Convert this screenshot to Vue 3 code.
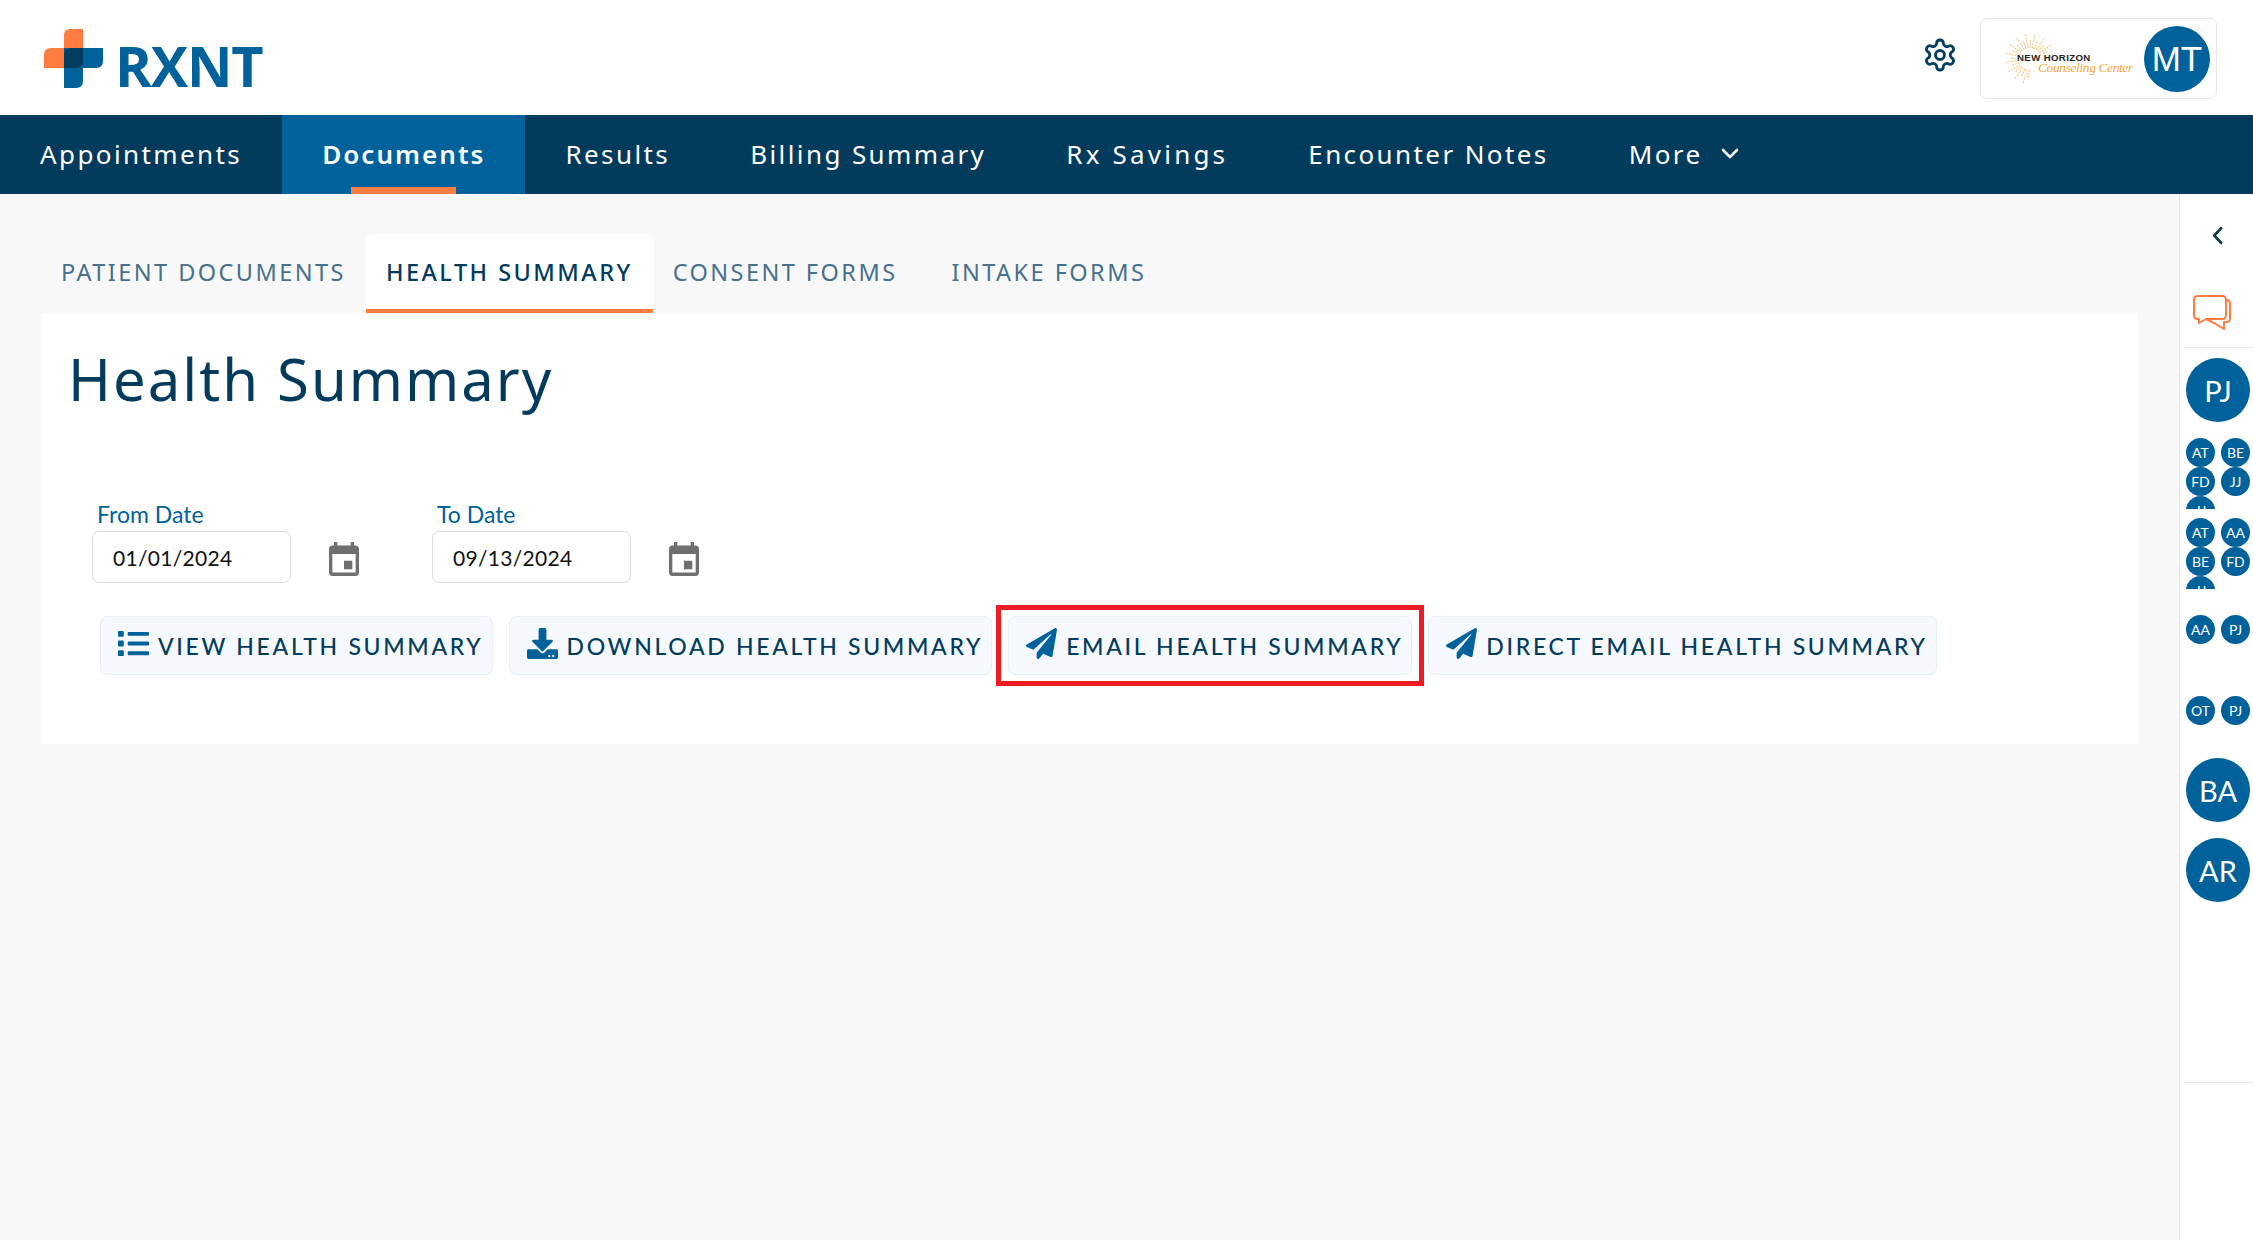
<script setup>
const navItems = [
  { label: 'Appointments' },
  { label: 'Documents', active: true },
  { label: 'Results' },
  { label: 'Billing Summary' },
  { label: 'Rx Savings', wide: true },
  { label: 'Encounter Notes' },
  { label: 'More', caret: true },
]
const tabs = [
  { label: 'PATIENT DOCUMENTS' },
  { label: 'HEALTH SUMMARY', active: true },
  { label: 'CONSENT FORMS' },
  { label: 'INTAKE FORMS', far: true },
]
const dates = [
  { label: 'From Date', value: '01/01/2024' },
  { label: 'To Date', value: '09/13/2024' },
]
const plane = 'M476 3.2L12.5 270.6c-18.1 10.4-15.8 35.6 2.2 43.2L121 358.4l287.3-253.2c5.5-4.9 13.3 2.6 8.6 8.3L176 407v80.5c0 23.6 28.5 32.9 42.5 15.8L282 426l124.6 52.2c14.2 6 30.4-2.9 33-18.2l72-432C515 7.8 493.3-6.8 476 3.2z'
const download = 'M216 0h80c13.3 0 24 10.7 24 24v168h87.7c17.8 0 26.7 21.5 14.1 34.1L269.7 378.3c-7.5 7.5-19.8 7.5-27.3 0L90.1 226.1c-12.6-12.6-3.7-34.1 14.1-34.1H192V24c0-13.3 10.7-24 24-24zm296 376v112c0 13.3-10.7 24-24 24H24c-13.3 0-24-10.7-24-24V376c0-13.3 10.7-24 24-24h146.7l49 49c20.1 20.1 52.5 20.1 72.6 0l49-49H488c13.3 0 24 10.7 24 24zm-124 88c0-11-9-20-20-20s-20 9-20 20 9 20 20 20 20-9 20-20zm64 0c0-11-9-20-20-20s-20 9-20 20 9 20 20 20 20-9 20-20z'
const list = 'M80 368H16a16 16 0 0 0-16 16v64a16 16 0 0 0 16 16h64a16 16 0 0 0 16-16v-64a16 16 0 0 0-16-16zm0-320H16A16 16 0 0 0 0 64v64a16 16 0 0 0 16 16h64a16 16 0 0 0 16-16V64a16 16 0 0 0-16-16zm0 160H16a16 16 0 0 0-16 16v64a16 16 0 0 0 16 16h64a16 16 0 0 0 16-16v-64a16 16 0 0 0-16-16zm416 176H176a16 16 0 0 0-16 16v32a16 16 0 0 0 16 16h320a16 16 0 0 0 16-16v-32a16 16 0 0 0-16-16zm0-320H176a16 16 0 0 0-16 16v32a16 16 0 0 0 16 16h320a16 16 0 0 0 16-16V80a16 16 0 0 0-16-16zm0 160H176a16 16 0 0 0-16 16v32a16 16 0 0 0 16 16h320a16 16 0 0 0 16-16v-32a16 16 0 0 0-16-16z'
const actions = [
  { label: 'VIEW HEALTH SUMMARY', icon: list },
  { label: 'DOWNLOAD HEALTH SUMMARY', icon: download },
  { label: 'EMAIL HEALTH SUMMARY', icon: plane, marked: true },
  { label: 'DIRECT EMAIL HEALTH SUMMARY', icon: plane },
]
const groups = [
  { names: ['AT', 'BE', 'FD', 'JJ', 'JJ'], kind: 'lead clipped' },
  { names: ['AT', 'AA', 'BE', 'FD', 'JJ'], kind: 'clipped' },
  { names: ['AA', 'PJ'], kind: 'pair-a' },
  { names: ['OT', 'PJ'], kind: 'pair-b' },
]
const rays = Array.from({ length: 23 }, (_, i) => {
  const a = ((i * 11 + 95) * Math.PI) / 180
  const far = i % 2 ? 26 : 20
  return { x1: 34 + Math.cos(a) * 11, y1: 27 + Math.sin(a) * 11, x2: 34 + Math.cos(a) * far, y2: 27 + Math.sin(a) * far }
})
</script>

<template>
  <div class="page">
    <header class="topbar">
      <div class="brand">
        <svg class="cross" viewBox="0 0 59 59" width="59" height="59" aria-hidden="true">
          <path fill="#ff7d40" d="M26 0h13v39H0V26q0-7 7-7h13V6q0-6 6-6z" />
          <path fill="#00619b" d="M20 19h39v13q0 7-7 7H39v13q0 7-7 7H20z" />
          <path fill="#033d5f" d="M27 19h12v13q0 7-7 7H20V26q0-7 7-7z" />
        </svg>
        <span class="wordmark">RXNT</span>
      </div>
      <div class="top-right">
        <svg class="gear" viewBox="0 0 24 24" width="36" height="36" fill="none" stroke="#033d5f" stroke-width="1.9" stroke-linejoin="round" aria-hidden="true">
          <path d="M12.22 2h-.44a2 2 0 0 0-2 2v.18a2 2 0 0 1-1 1.73l-.43.25a2 2 0 0 1-2 0l-.15-.08a2 2 0 0 0-2.73.73l-.22.38a2 2 0 0 0 .73 2.73l.15.1a2 2 0 0 1 1 1.72v.51a2 2 0 0 1-1 1.74l-.15.09a2 2 0 0 0-.73 2.73l.22.38a2 2 0 0 0 2.73.73l.15-.08a2 2 0 0 1 2 0l.43.25a2 2 0 0 1 1 1.73V20a2 2 0 0 0 2 2h.44a2 2 0 0 0 2-2v-.18a2 2 0 0 1 1-1.73l.43-.25a2 2 0 0 1 2 0l.15.08a2 2 0 0 0 2.73-.73l.22-.39a2 2 0 0 0-.73-2.73l-.15-.08a2 2 0 0 1-1-1.74v-.5a2 2 0 0 1 1-1.74l.15-.09a2 2 0 0 0 .73-2.73l-.22-.38a2 2 0 0 0-2.73-.73l-.15.08a2 2 0 0 1-2 0l-.43-.25a2 2 0 0 1-1-1.73V4a2 2 0 0 0-2-2z" />
          <circle cx="12" cy="12" r="3" />
        </svg>
        <div class="account">
          <div class="clinic">
            <svg class="sun" viewBox="0 0 60 54" width="60" height="54" aria-hidden="true">
              <line v-for="(r, i) in rays" :key="i" :x1="r.x1" :y1="r.y1" :x2="r.x2" :y2="r.y2" stroke="#fbc680" stroke-width="1.1" stroke-dasharray="2 1" />
            </svg>
            <span class="clinic-name">NEW HORIZON</span>
            <span class="clinic-script">Counseling Center</span>
          </div>
          <div class="avatar-mt">MT</div>
        </div>
      </div>
    </header>

    <nav class="nav">
      <a v-for="item in navItems" :key="item.label" class="nav-item" :class="{ active: item.active, wide: item.wide }">
        {{ item.label }}
        <svg v-if="item.caret" class="caret" viewBox="0 0 18 11" width="18" height="11" aria-hidden="true">
          <path d="M2 2l7 7 7-7" fill="none" stroke="#fff" stroke-width="2.6" stroke-linecap="round" stroke-linejoin="round" />
        </svg>
      </a>
    </nav>

    <div class="body">
      <main class="main">
        <div class="tabs">
          <div v-for="t in tabs" :key="t.label" class="tab" :class="{ active: t.active, far: t.far }">{{ t.label }}</div>
        </div>
        <section class="card">
          <h1 class="title">Health Summary</h1>
          <div class="dates">
            <div v-for="d in dates" :key="d.label" class="date">
              <div class="field">
                <label class="date-label">{{ d.label }}</label>
                <div class="date-input">{{ d.value }}</div>
              </div>
              <svg class="cal" viewBox="3 1 18 20" width="30" height="34" preserveAspectRatio="none" aria-hidden="true">
                <path fill="#6f6f6f" d="M17 12h-5v5h5v-5zM16 1v2H8V1H6v2H5c-1.11 0-1.99.9-1.99 2L3 19c0 1.1.89 2 2 2h14c1.1 0 2-.9 2-2V5c0-1.1-.9-2-2-2h-1V1h-2zm3 18H5V8h14v11z" />
              </svg>
            </div>
          </div>
          <div class="actions">
            <button v-for="a in actions" :key="a.label" class="action" type="button">
              <svg class="action-icon" viewBox="0 0 512 512" width="31" height="31" aria-hidden="true">
                <path :d="a.icon" fill="#00619b" />
              </svg>
              <span>{{ a.label }}</span>
              <span v-if="a.marked" class="marker"></span>
            </button>
          </div>
        </section>
      </main>

      <aside class="side">
        <div class="side-top">
          <svg viewBox="0 0 12 20" width="11" height="19" aria-hidden="true">
            <path d="M10 2L2.5 10l7.5 8" fill="none" stroke="#0c3c40" stroke-width="3" stroke-linecap="round" stroke-linejoin="round" />
          </svg>
          <svg class="chat" viewBox="0 0 38 36" width="38" height="36" fill="none" stroke="#ff7d40" stroke-width="2" stroke-linejoin="round" aria-hidden="true">
            <path d="M5 1h24q4 0 4 4v15q0 4-4 4H13l-7 4 0-4H5q-4 0-4-4V5q0-4 4-4z" />
            <path d="M33 5q4 0 4 4v14q0 4-4 4h-2v7l-10-6-8-4" />
          </svg>
        </div>
        <div class="avatars">
          <div class="avatar-lg first">PJ</div>
          <div v-for="(g, i) in groups" :key="i" class="group" :class="g.kind">
            <div v-for="(n, j) in g.names" :key="j" class="avatar-sm">{{ n }}</div>
          </div>
          <div class="avatar-lg second">BA</div>
          <div class="avatar-lg third">AR</div>
        </div>
        <div class="side-rule"></div>
      </aside>
    </div>
  </div>
</template>

<style>
html, body { margin: 0; background: #f8f8f8; }
</style>

<style scoped>
.page {
  width: 2253px;
  height: 1240px;
  display: flex;
  flex-direction: column;
  overflow: hidden;
  background: #f8f8f8;
  font-family: "Noto Sans", sans-serif;
}
.topbar {
  height: 115px;
  flex: none;
  background: #fff;
  display: flex;
  justify-content: space-between;
  align-items: flex-start;
  box-sizing: border-box;
  padding-left: 44px;
}
.brand {
  display: flex;
  align-items: flex-start;
  margin-top: 29px;
}
.wordmark {
  font-family: "Open Sans", sans-serif;
  font-weight: 700;
  font-size: 56px;
  line-height: 59px;
  margin-left: 12px;
  margin-top: 7px;
  color: #00619b;
  letter-spacing: -1.2px;
}
.top-right {
  display: flex;
  align-items: flex-start;
  padding-right: 36px;
}
.gear {
  margin-top: 37px;
  margin-right: 22px;
}
.account {
  margin-top: 18px;
  width: 237px;
  height: 81px;
  box-sizing: border-box;
  border: 1px solid #e8e8e8;
  border-radius: 7px;
  display: flex;
  align-items: center;
  justify-content: space-between;
  padding: 0 6px 0 15px;
}
.clinic {
  position: relative;
  width: 136px;
  height: 54px;
}
.sun { position: absolute; left: 0; top: 0; }
.clinic-name {
  position: absolute;
  left: 21px;
  top: 20px;
  font-family: "Liberation Sans", sans-serif;
  font-size: 9.6px;
  font-weight: 700;
  color: #222;
  letter-spacing: 0.4px;
  white-space: nowrap;
}
.clinic-script {
  position: absolute;
  left: 42px;
  top: 28px;
  font-family: "Liberation Serif", serif;
  font-style: italic;
  font-size: 13.5px;
  letter-spacing: -0.4px;
  color: #f9a83a;
  white-space: nowrap;
}
.avatar-mt {
  width: 66px;
  height: 66px;
  border-radius: 50%;
  background: #00619b;
  color: #fff;
  font-family: "Liberation Sans", sans-serif;
  font-size: 35px;
  display: flex;
  align-items: center;
  justify-content: center;
}
.nav {
  height: 79px;
  flex: none;
  background: #033b5c;
  display: flex;
}
.nav-item {
  position: relative;
  display: flex;
  align-items: center;
  gap: 18px;
  padding: 0 40px 2px;
  color: #fff;
  font-size: 26px;
  letter-spacing: 2.4px;
}
.nav-item.active {
  background: #00619b;
  font-weight: 600;
  letter-spacing: 2.05px;
}
.nav-item.wide { letter-spacing: 3.2px; }
.nav-item.active::after {
  content: "";
  position: absolute;
  left: 69px;
  right: 69px;
  bottom: 0;
  height: 7px;
  background: #ff7d40;
}
.body {
  flex: 1;
  display: flex;
  min-height: 0;
}
.main {
  flex: 1;
  padding: 40px 41px 0;
  min-width: 0;
}
.tabs {
  display: flex;
  height: 79px;
}
.tab {
  padding: 0 20px 3px;
  display: flex;
  align-items: center;
  box-sizing: border-box;
  font-size: 23.5px;
  letter-spacing: 2.45px;
  color: #46708c;
  border-radius: 8px 8px 0 0;
  white-space: nowrap;
}
.tab.active {
  background: #fff;
  color: #033b5c;
  font-weight: 500;
  border-bottom: 4px solid #ff7d40;
  padding-bottom: 0;
}
.tab.far { margin-left: 14px; }
.card {
  height: 431px;
  background: #fff;
  box-sizing: border-box;
  padding: 28px 0 0 0;
}
.title {
  margin: 0 0 0 27px;
  font-size: 58px;
  font-weight: 400;
  line-height: 76px;
  color: #033b5c;
  letter-spacing: 2px;
}
.dates {
  display: flex;
  margin: 83px 0 0 51px;
  gap: 73px;
}
.date {
  display: flex;
  align-items: flex-end;
}
.field {
  display: flex;
  flex-direction: column;
}
.date-label {
  font-family: Lato, sans-serif;
  font-size: 23px;
  line-height: 28px;
  color: #00619b;
  padding-left: 5px;
  margin-bottom: 3px;
}
.date-input {
  width: 199px;
  height: 52px;
  box-sizing: border-box;
  border: 1px solid #dedede;
  border-radius: 7px;
  background: #fff;
  padding-left: 20px;
  display: flex;
  align-items: center;
  font-family: Lato, sans-serif;
  font-size: 21px;
  letter-spacing: 0.3px;
  color: #111;
}
.cal {
  margin-left: 38px;
  margin-bottom: 7px;
}
.actions {
  display: flex;
  gap: 16px;
  margin: 33px 0 0 59px;
}
.action {
  position: relative;
  display: flex;
  align-items: center;
  gap: 9px;
  height: 59px;
  box-sizing: border-box;
  padding: 0 8px 0 17px;
  background: #f5f9fe;
  border: 1px solid #e8eff7;
  border-radius: 7px;
  font-family: Lato, sans-serif;
  font-size: 23px;
  font-weight: 500;
  letter-spacing: 2.68px;
  color: #033b5c;
  white-space: nowrap;
}
.action-icon {
  flex: none;
  margin-top: -5px;
}
.marker {
  position: absolute;
  inset: -12px -13px;
  border: 5px solid #ed1c24;
  pointer-events: none;
}
.side {
  width: 74px;
  flex: none;
  box-sizing: border-box;
  background: #fff;
  border-left: 1px solid #e8e8e8;
  display: flex;
  flex-direction: column;
  position: relative;
}
.side-top {
  height: 154px;
  margin-left: 3px;
  border-bottom: 1px solid #e8e8e8;
  display: flex;
  flex-direction: column;
  align-items: center;
  box-sizing: border-box;
  padding-top: 32px;
}
.side-top > svg:first-child { margin-left: -2px; }
.chat {
  margin-top: 50px;
  margin-left: -13px;
}
.avatars {
  padding-left: 6px;
  display: flex;
  flex-direction: column;
}
.avatar-lg {
  width: 64px;
  height: 64px;
  border-radius: 50%;
  background: #00619b;
  color: #fff;
  font-family: Lato, sans-serif;
  font-size: 29px;
  display: flex;
  align-items: center;
  justify-content: center;
}
.avatar-lg.first { margin-top: 10px; }
.avatar-lg.second { margin-top: 33px; }
.avatar-lg.third { margin-top: 16px; }
.group {
  display: grid;
  grid-template-columns: 29px 29px;
  column-gap: 6px;
  margin-top: 9px;
  width: 64px;
}
.group.clipped {
  height: 71px;
  overflow: hidden;
}
.group.lead { margin-top: 16px; }
.group.pair-a { margin-top: 26px; }
.group.pair-b { margin-top: 52px; }
.avatar-sm {
  width: 29px;
  height: 29px;
  border-radius: 50%;
  background: #00619b;
  color: #fff;
  font-family: Lato, sans-serif;
  font-size: 14px;
  display: flex;
  align-items: center;
  justify-content: center;
}
.side-rule {
  position: absolute;
  left: 4px;
  right: 0;
  top: 888px;
  border-top: 1px solid #e8e8e8;
}
</style>
